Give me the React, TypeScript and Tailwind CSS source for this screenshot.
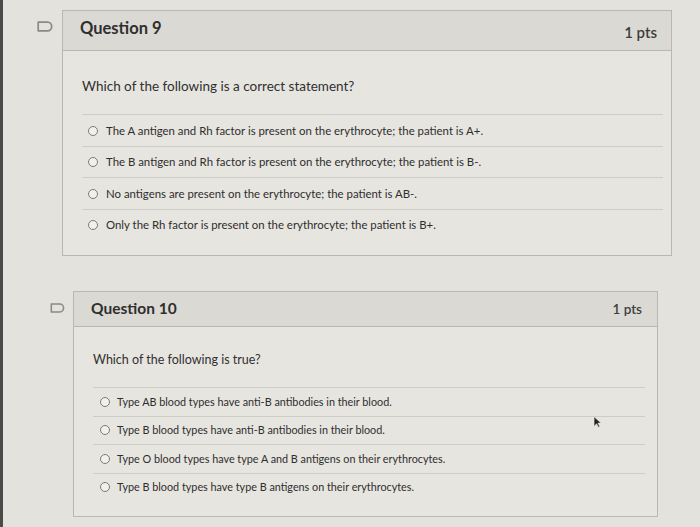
import React from "react";

type CardProps = {
  title: string;
  prompt: string;
  answers: string[];
  wrap: string;
  head: string;
  titleCls: string;
  ptsCls: string;
  body: string;
  promptCls: string;
  rowCls: string;
  flagCls: string;
};

function Flag({ className }: { className: string }) {
  return (
    <svg viewBox="0 0 16 11" className={className} fill="none">
      <path d="M1.2 1.2h9.3c2.4 0 4.2 1.9 4.2 4.3s-1.8 4.3-4.2 4.3H1.2z" stroke="#8a8986" strokeWidth="1.7" strokeLinejoin="round" />
    </svg>
  );
}

function QuestionCard(p: CardProps) {
  return (
    <div className={"relative " + p.wrap}>
      <Flag className={p.flagCls} />
      <div className="border border-[#b9b7b2] bg-[#e7e5e0]">
        <div className={"flex items-center justify-between border-b border-[#b9b7b2] bg-[#dbd9d4] " + p.head}>
          <h2 className={"font-bold text-[#2f2f2f] " + p.titleCls}>{p.title}</h2>
          <span className={"font-semibold text-[#3d3d3d] " + p.ptsCls}>1 pts</span>
        </div>
        <div className={p.body}>
          <p className={"text-[#303030] " + p.promptCls}>{p.prompt}</p>
          <div>
            {p.answers.map((a) => (
              <div key={a} className={"flex items-center border-t border-[#cfcdc8] " + p.rowCls}>
                <span className="h-[10px] w-[10px] shrink-0 rounded-full border border-[#7c7b78] bg-[#f1f0ec]" />
                <span className="text-[#2e2e2e]">{a}</span>
              </div>
            ))}
          </div>
        </div>
      </div>
    </div>
  );
}

export default function App() {
  return (
    <div className="relative h-[527px] w-[700px] overflow-hidden border-l-[3px] border-[#4a4a48] bg-[#e4e2dd] pt-[10px] font-['Lato','Liberation_Sans',sans-serif]">
      <QuestionCard
        title="Question 9"
        prompt="Which of the following is a correct statement?"
        answers={[
          "The A antigen and Rh factor is present on the erythrocyte; the patient is A+.",
          "The B antigen and Rh factor is present on the erythrocyte; the patient is B-.",
          "No antigens are present on the erythrocyte; the patient is AB-.",
          "Only the Rh factor is present on the erythrocyte; the patient is B+.",
        ]}
        wrap="ml-[59px] mr-[28px]"
        flagCls="absolute left-[-25px] top-[11px] h-[11px] w-[16px]"
        head="h-[40px] pl-[17px] pr-[14px]"
        titleCls="text-[16.5px] mb-[4px]"
        ptsCls="text-[15px] pt-[4px]"
        body="pl-[19px] pr-[8px] pt-[25px] pb-[15px]"
        promptCls="text-[13.5px] mb-[18px]"
        rowCls="h-[31.5px] gap-[8px] pl-[6px] text-[11.4px]"
      />
      <QuestionCard
        title="Question 10"
        prompt="Which of the following is true?"
        answers={[
          "Type AB blood types have anti-B antibodies in their blood.",
          "Type B blood types have anti-B antibodies in their blood.",
          "Type O blood types have type A and B antigens on their erythrocytes.",
          "Type B blood types have type B antigens on their erythrocytes.",
        ]}
        wrap="ml-[70px] mr-[42px] mt-[35px]"
        flagCls="absolute left-[-23px] top-[12px] h-[10px] w-[15px]"
        head="h-[35px] pl-[17px] pr-[15px]"
        titleCls="text-[15.5px] mb-[1px]"
        ptsCls="text-[13.5px]"
        body="pl-[19px] pr-[12px] pt-[24px] pb-[15px]"
        promptCls="text-[12.5px] mb-[17px]"
        rowCls="h-[28.5px] gap-[7px] pl-[7px] text-[10.8px]"
      />
      <svg viewBox="0 0 10 14" className="absolute left-[590px] top-[416px] h-[12px] w-[9px]">
        <path d="M1 1v11l3-3 2 4 1.5-.8-2-4H9z" fill="#222" stroke="#eee" strokeWidth="0.6" />
      </svg>
    </div>
  );
}
